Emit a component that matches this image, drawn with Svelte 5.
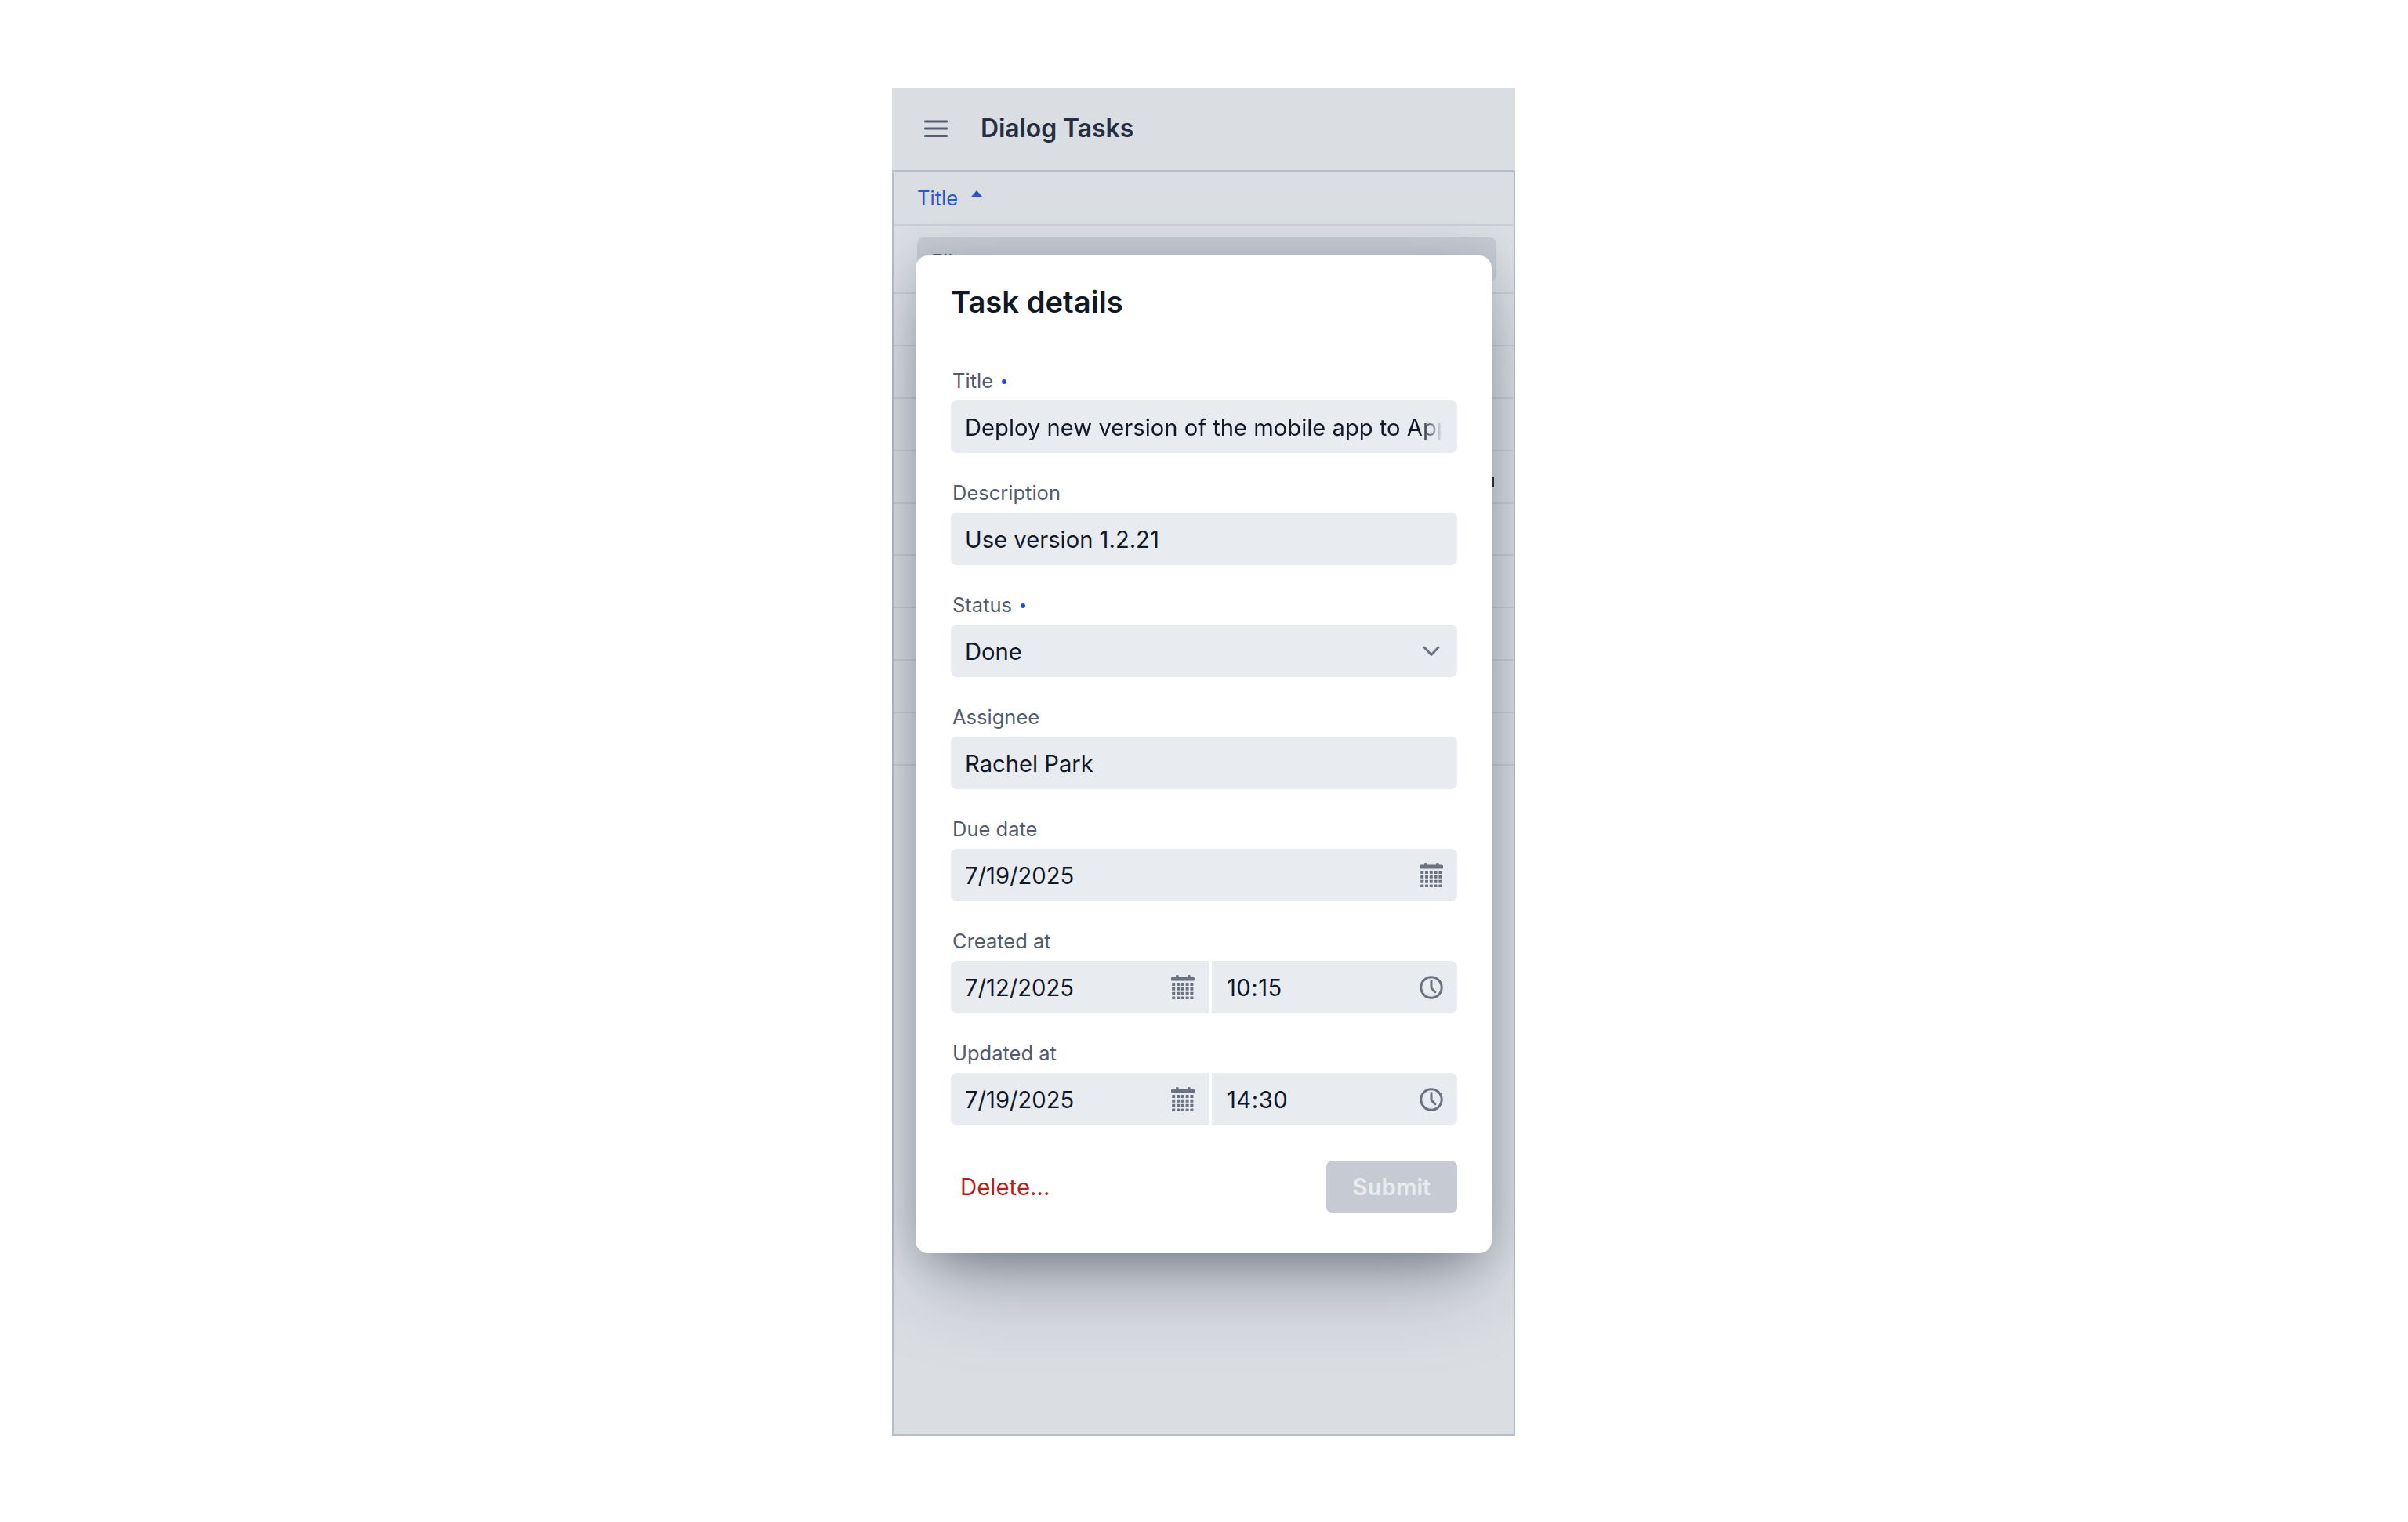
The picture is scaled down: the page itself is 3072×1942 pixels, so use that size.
<script>
  let title = $state('Deploy new version of the mobile app to App Store');
  let description = $state('Use version 1.2.21');
  let assignee = $state('Rachel Park');
  let due = $state('7/19/2025');

  const dateCells = Array.from({ length: 20 }, (_, i) => ({
    x: 1.2 + (i % 5) * 5.8,
    y: 10 + Math.floor(i / 5) * 5.85
  }));

  const stamps = [
    { label: 'Created at', date: '7/12/2025', time: '10:15' },
    { label: 'Updated at', date: '7/19/2025', time: '14:30' }
  ];
</script>

{#snippet calendar()}
  <svg class="icon" width="30" height="31" viewBox="0 0 30 31" aria-hidden="true">
    <rect x="0" y="2.4" width="30" height="5.2" rx="1.6" />
    <rect x="6" y="0" width="3.6" height="4" rx="1.2" />
    <rect x="21" y="0" width="3.6" height="4" rx="1.2" />
    {#each dateCells as c}
      <rect x={c.x} y={c.y} width="4" height="4" rx="0.6" />
    {/each}
  </svg>
{/snippet}

{#snippet clock()}
  <svg class="icon line" width="30" height="30" viewBox="0 0 30 30" aria-hidden="true">
    <circle cx="15" cy="15" r="13.2" />
    <path d="M15 6.5v9.2l4.8 5" />
  </svg>
{/snippet}

<div class="page">
  <div class="frame">
    <header class="topbar">
      <svg class="burger" width="30" height="22" viewBox="0 0 30 22" aria-hidden="true">
        <path d="M1.5 2h27M1.5 11h27M1.5 20.500h27" />
      </svg>
      <h1>Dialog Tasks</h1>
    </header>

    <div class="table">
      <div class="th">
        <span>Title</span>
        <svg class="sort" width="14" height="8" viewBox="0 0 14 8" aria-hidden="true"><path d="M7 0l7 8H0z" /></svg>
      </div>
      <div class="filter-cell">
        <div class="filter">Filter...</div>
      </div>
      {#each Array(9) as _, i}
        <div class="row">
          {#if i === 3}<span class="row-tip"></span>{/if}
        </div>
      {/each}
    </div>

    <div class="overlay"></div>

    <div class="dialog-wrap">
      <div class="dialog" role="dialog" aria-label="Task details">
        <h2>Task details</h2>

        <div class="fields">
          <div class="field">
            <span class="lbl">Title <i class="req"></i></span>
            <div class="box"><input class="fade" bind:value={title} readonly /></div>
          </div>
          <div class="field">
            <span class="lbl">Description</span>
            <div class="box"><input bind:value={description} readonly /></div>
          </div>
          <div class="field">
            <span class="lbl">Status <i class="req"></i></span>
            <div class="box">
              <span class="val">Done</span>
              <svg class="icon line chev" width="26" height="16" viewBox="0 0 26 16" aria-hidden="true"><path d="M4 3l9 9.500L22 3" /></svg>
            </div>
          </div>
          <div class="field">
            <span class="lbl">Assignee</span>
            <div class="box"><input bind:value={assignee} readonly /></div>
          </div>
          <div class="field">
            <span class="lbl">Due date</span>
            <div class="box">
              <input bind:value={due} readonly />
              {@render calendar()}
            </div>
          </div>
          {#each stamps as s}
            <div class="field">
              <span class="lbl">{s.label}</span>
              <div class="split">
                <div class="box left">
                  <span class="val">{s.date}</span>
                  {@render calendar()}
                </div>
                <div class="box right">
                  <span class="val time">{s.time}</span>
                  {@render clock()}
                </div>
              </div>
            </div>
          {/each}
        </div>

        <div class="actions">
          <button class="del">Delete...</button>
          <button class="submit" disabled>Submit</button>
        </div>
      </div>
    </div>
  </div>
</div>

<style>
  :global(body) { margin: 0; background: #fff; font-family: Inter, "Liberation Sans", sans-serif; }

  .page { display: flex; justify-content: center; padding: 112px 1px 0 0; height: 1830px; }
  .frame { position: relative; width: 795px; height: 1720px; overflow: hidden; background: #fff; }

  .topbar { display: flex; align-items: center; padding: 0 0 2px 41px; gap: 42px; border-bottom: 3px solid #cfd4da; box-sizing: border-box; height: 108px; }
  .burger { flex: none; }
  .burger path { fill: none; stroke: #4b5669; stroke-width: 3.100; stroke-linecap: round; }
  h1 { margin: 0; font-size: 32px; font-weight: 600; color: #0f172a; letter-spacing: -0.1px; }

  .table { height: 1612px; box-sizing: border-box; border: 2px solid #d1d5db; border-top: none; }
  .th { display: flex; align-items: flex-start; gap: 17px; height: 68px; padding: 18px 0 0 30px; box-sizing: border-box; font-size: 25.500px; line-height: 30px; color: #1d4ed8; border-bottom: 2px solid #e8eaee; }
  .sort { margin-top: 5px; fill: #1d4ed8; }
  .filter-cell { height: 87px; padding: 15px 22px 0 30px; box-sizing: border-box; border-bottom: 2px solid #e8eaee; }
  .filter { height: 56px; border-radius: 8px; background: #e5e7eb; font-size: 25.500px; line-height: 62px; padding-left: 18px; color: #4b5563; }
  .row { position: relative; height: 66.900px; box-sizing: border-box; border-bottom: 2px solid #e8eaee; }
  .row-tip { position: absolute; left: 764px; top: 32px; width: 2px; height: 14px; background: #111827; }

  .overlay { position: absolute; inset: 0; background: rgba(107, 120, 140, 0.25); }

  .dialog-wrap { position: absolute; inset: 0; display: flex; justify-content: center; align-items: flex-start; padding-top: 214px; }
  .dialog {
    width: 735px;
    height: 1273px;
    box-sizing: border-box;
    padding: 0 44px 0 45px;
    background: #fff;
    border-radius: 16px;
    box-shadow: 0 50px 100px -20px rgba(30, 42, 62, 0.34), 0 30px 50px -25px rgba(30, 42, 62, 0.25), 0 0 50px rgba(30, 42, 62, 0.14);
  }

  h2 { margin: 0; padding-top: 37px; font-size: 38.200px; line-height: 44px; font-weight: 600; color: #111827; }

  .fields { display: flex; flex-direction: column; gap: 31px; margin-top: 59px; }
  .field { display: flex; flex-direction: column; gap: 6px; }
  .lbl { display: flex; align-items: center; gap: 11px; height: 39.300px; padding-left: 2px; font-size: 25.500px; line-height: 39.300px; color: #525c6c; }
  .req { width: 6px; height: 6px; border-radius: 50%; background: #1d4ed8; margin-top: 3px; }

  .box { display: flex; align-items: center; justify-content: space-between; height: 66.700px; padding: 1px 18px 0 18px; box-sizing: border-box; background: #e8ebf0; border-radius: 8px; font-size: 29.200px; color: #111827; }
  .box .icon { margin-top: -1px; }
  .box input { flex: 1; min-width: 0; border: none; outline: none; padding: 0; background: transparent; font: inherit; color: inherit; }
  .box input.fade { -webkit-mask-image: linear-gradient(to left, transparent, #000 30px); mask-image: linear-gradient(to left, transparent, #000 30px); }
  .time { margin-left: 1px; letter-spacing: 0.5px; }

  .split { display: flex; gap: 4px; }
  .left { width: 329px; border-radius: 8px 0 0 8px; }
  .right { width: 313px; border-radius: 0 8px 8px 0; }

  .icon { flex: none; fill: #6b7280; }
  .icon.line { fill: none; stroke: #6b7280; stroke-width: 3; stroke-linecap: round; stroke-linejoin: round; }
  .chev { margin-right: 2px; }

  .actions { display: flex; justify-content: space-between; align-items: center; margin-top: 45px; }
  button { height: 67px; border: none; border-radius: 8px; font: inherit; font-size: 29.400px; background: none; padding: 0; }
  .del { padding-left: 12px; color: #b4231a; font-weight: 400; }
  .submit { width: 167px; background: #c5cad3; color: #e9ebef; font-weight: 600; }
</style>
